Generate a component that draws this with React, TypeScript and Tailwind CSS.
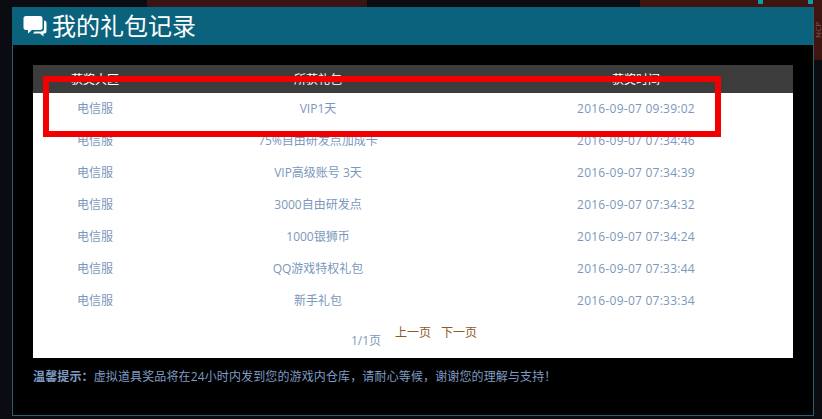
const rows = [
  { name: "VIP1天", time: "2016-09-07 09:39:02" },
  { name: "75%自由研发点加成卡", time: "2016-09-07 07:34:46" },
  { name: "VIP高级账号 3天", time: "2016-09-07 07:34:39" },
  { name: "3000自由研发点", time: "2016-09-07 07:34:32" },
  { name: "1000银狮币", time: "2016-09-07 07:34:24" },
  { name: "QQ游戏特权礼包", time: "2016-09-07 07:33:44" },
  { name: "新手礼包", time: "2016-09-07 07:33:34" },
];

const font = "font-['Open_Sans','Noto_Sans_CJK_SC',sans-serif]";

function ChatIcon() {
  return (
    <svg width="24" height="22" viewBox="0 0 24 22" fill="white" className="shrink-0">
      <path d="M3 1h14a2.500 2.500 0 0 1 2.500 2.500v9A2.500 2.500 0 0 1 17 15H9l-4 3.500V15H3a2.500 2.500 0 0 1-2.500-2.500v-9A2.500 2.500 0 0 1 3 1z" />
      <path d="M21 5.500a2.500 2.500 0 0 1 2.500 2.500v8a2.500 2.500 0 0 1-2.500 2.500h-.5V21.500l-3.500-3h-7l1.500-2H18a3 3 0 0 0 3-3z" />
    </svg>
  );
}

export default function App() {
  return (
    <div className={`relative h-[419px] w-[822px] overflow-hidden bg-[#0b0b12] ${font}`}>
      <div className="flex h-[7px]">
        <div className="w-[147px]" />
        <div className="w-[220px] bg-[#3a1414]" />
        <div className="w-[273px] bg-[#0b0b12]" />
        <div className="relative w-[182px] bg-[#3f1512]">
          <div className="absolute left-[118px] top-0 h-1 w-[5px] bg-[#0e9aa8]" />
          <div className="absolute left-[168px] top-0 h-1 w-[5px] bg-[#0e9aa8]" />
        </div>
      </div>
      <div className="ml-3 h-[409px] w-[802px] border-x border-b border-[#2b5f70] bg-black">
        <div className="-ml-px flex h-[38px] w-[801px] items-center gap-[5px] bg-[#0b627d] pl-[11px]">
          <ChatIcon />
          <h1 className="text-[24px] leading-none font-normal text-white">我的礼包记录</h1>
        </div>
        <div className="mx-5 mt-5 bg-white">
          <div className="grid h-7 grid-cols-[124px_322px_314px] items-center bg-[#3c3c3c] pt-px text-center text-xs text-white">
            <span>获奖大区</span>
            <span>所获礼包</span>
            <span>获奖时间</span>
          </div>
          {rows.map((row) => (
            <div key={row.time} className="grid h-8 grid-cols-[124px_322px_314px] items-center text-center text-xs text-[#7b97bd]">
              <span>电信服</span>
              <span>{row.name}</span>
              <span className="tracking-[0.25px]">{row.time}</span>
            </div>
          ))}
          <div className="flex h-[41px] justify-center gap-[14px] pl-[2px] text-xs">
            <span className="mt-[16px] text-[#7b97bd]">1/1页</span>
            <span className="mt-[8px] text-[#8a5a2a]">上一页</span>
            <span className="mt-[8px] -ml-1 text-[#8a5a2a]">下一页</span>
          </div>
        </div>
        <p className="mx-5 mt-[11px] text-xs tracking-[0.13px] text-[#7f9cc4]">
          <b>温馨提示：</b>虚拟道具奖品将在24小时内发到您的游戏内仓库，请耐心等候，谢谢您的理解与支持！
        </p>
      </div>
      <div className="absolute right-0 top-0 flex h-[60px] w-2 items-center justify-center bg-[#3f1512]">
        <span className="rotate-180 text-[8px] leading-none text-[#7a5a58] [writing-mode:vertical-rl]">NCP</span>
      </div>
      <div className="absolute left-[43px] top-[76px] h-[61px] w-[678px] border-[6px] border-[#f00000]" />
    </div>
  );
}
